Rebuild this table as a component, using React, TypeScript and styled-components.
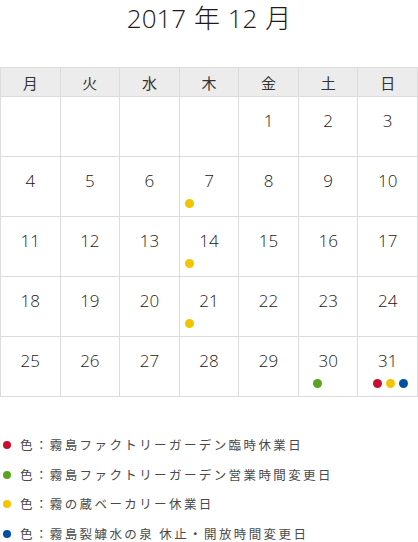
import React from "react";
import styled, { createGlobalStyle } from "styled-components";

const COLORS = {
  red: "#c8102e",
  green: "#5ba41e",
  yellow: "#f4c400",
  blue: "#0050a0",
};

type DotColor = keyof typeof COLORS;

interface IDay {
  day?: number;
  dots?: DotColor[];
  dotOffset?: number;
}

const WEEK = ["月", "火", "水", "木", "金", "土", "日"];

const days: IDay[] = [
  {}, {}, {}, {},
  { day: 1 }, { day: 2 }, { day: 3 },
  { day: 4 }, { day: 5 }, { day: 6 },
  { day: 7, dots: ["yellow"], dotOffset: 5 },
  { day: 8 }, { day: 9 }, { day: 10 },
  { day: 11 }, { day: 12 }, { day: 13 },
  { day: 14, dots: ["yellow"], dotOffset: 5 },
  { day: 15 }, { day: 16 }, { day: 17 },
  { day: 18 }, { day: 19 }, { day: 20 },
  { day: 21, dots: ["yellow"], dotOffset: 5 },
  { day: 22 }, { day: 23 }, { day: 24 },
  { day: 25 }, { day: 26 }, { day: 27 }, { day: 28 }, { day: 29 },
  { day: 30, dots: ["green"], dotOffset: 14 },
  { day: 31, dots: ["red", "yellow", "blue"], dotOffset: 15 },
];

const legends: { color: DotColor; text: string }[] = [
  { color: "red", text: "色：霧島ファクトリーガーデン臨時休業日" },
  { color: "green", text: "色：霧島ファクトリーガーデン営業時間変更日" },
  { color: "yellow", text: "色：霧の蔵ベーカリー休業日" },
  { color: "blue", text: "色：霧島裂罅水の泉 休止・開放時間変更日" },
];

function App() {
  return (
    <>
      <GlobalStyle />
      <Wrapper>
        <Title>2017 年 12 月</Title>
        <Calendar>
          {WEEK.map((w) => (
            <HeadCell key={w}>{w}</HeadCell>
          ))}
          {days.map((d, index) => (
            <DayCell key={index}>
              {d.day && <DayNumber>{d.day}</DayNumber>}
              {d.dots && (
                <DotRow $offset={d.dotOffset || 0}>
                  {d.dots.map((c) => (
                    <Dot key={c} $color={COLORS[c]} />
                  ))}
                </DotRow>
              )}
            </DayCell>
          ))}
        </Calendar>
        <Legend>
          {legends.map((item) => (
            <LegendItem key={item.color}>
              <LegendDot $color={COLORS[item.color]} />
              <LegendText>{item.text}</LegendText>
            </LegendItem>
          ))}
        </Legend>
      </Wrapper>
    </>
  );
}

export default App;

const GlobalStyle = createGlobalStyle`
  body {
    margin: 0;
    background: #fff;
    font-family: "Noto Sans CJK JP", "Noto Sans", sans-serif;
  }
`;

const Wrapper = styled.div`
  width: 418px;
  display: flex;
  flex-direction: column;
`;

const Title = styled.div`
  height: 67px;
  box-sizing: border-box;
  padding-top: 1px;
  text-align: center;
  font-family: "Open Sans", "Noto Sans CJK JP", sans-serif;
  font-weight: 300;
  font-size: 26px;
  line-height: 34px;
  color: #231815;
  word-spacing: 1px;
`;

const Calendar = styled.div`
  display: grid;
  grid-template-columns: repeat(7, 1fr);
  grid-template-rows: 29px repeat(5, 60px);
  border-top: 1px solid #dcdcdc;
  border-left: 1px solid #dcdcdc;
  box-sizing: border-box;
  width: 418px;
`;

const HeadCell = styled.div`
  background: #ececec;
  border-right: 1px solid #dcdcdc;
  border-bottom: 1px solid #dcdcdc;
  display: flex;
  align-items: center;
  justify-content: center;
  font-size: 15px;
  color: #333;
`;

const DayCell = styled.div`
  position: relative;
  border-right: 1px solid #dcdcdc;
  border-bottom: 1px solid #dcdcdc;
  display: flex;
  flex-direction: column;
  align-items: center;
`;

const DayNumber = styled.div`
  margin-top: 12px;
  font-family: "Open Sans", "Noto Sans", sans-serif;
  font-weight: 300;
  font-size: 17px;
  line-height: 24px;
  color: #231815;
`;

const DotRow = styled.div<{ $offset: number }>`
  position: absolute;
  left: ${(p) => p.$offset}px;
  top: 42px;
  display: flex;
  gap: 4px;
`;

const Dot = styled.span<{ $color: string }>`
  width: 9px;
  height: 9px;
  border-radius: 50%;
  background: ${(p) => p.$color};
`;

const Legend = styled.div`
  display: flex;
  flex-direction: column;
  gap: 9.5px;
  padding-top: 38px;
  padding-left: 3px;
`;

const LegendItem = styled.div`
  display: flex;
  align-items: center;
  height: 20px;
  gap: 9px;
`;

const LegendDot = styled.span<{ $color: string }>`
  width: 8px;
  height: 8px;
  border-radius: 50%;
  background: ${(p) => p.$color};
`;

const LegendText = styled.span`
  font-size: 12.5px;
  line-height: 20px;
  letter-spacing: 2.4px;
  color: #4a4a4a;
`;
